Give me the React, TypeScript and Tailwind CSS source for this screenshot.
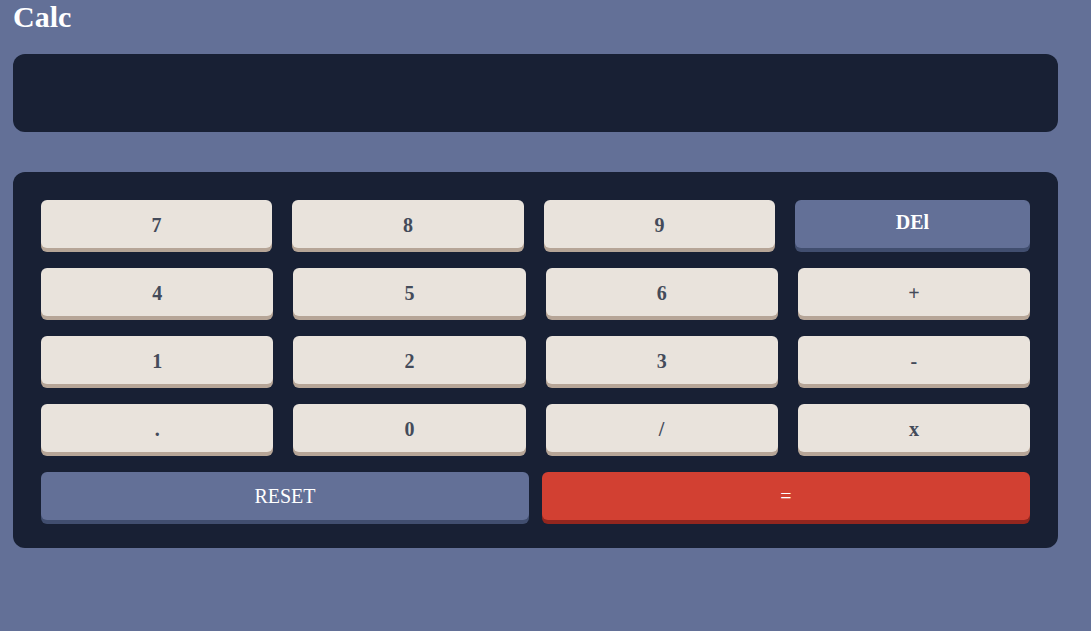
const ROW1 = ['7', '8', '9']
const GRID = ['4', '5', '6', '+', '1', '2', '3', '-', '.', '0', '/', 'x']

function Key({ label }: { label: string }) {
  return (
    <button className="h-12 pt-[2px] rounded-md bg-[#e9e3dc] shadow-[0_4px_0_#b6a597] text-[20px] font-bold text-[#444b5a] cursor-pointer">
      {label}
    </button>
  )
}

export default function App() {
  return (
    <main className="min-h-screen bg-[#637097] px-[13px] font-['Liberation_Serif',serif]">
      <h1 className="text-[30px] leading-[34px] font-bold text-white">Calc</h1>

      <div className="mt-5 w-[1045px] h-[78px] rounded-xl bg-[#182034]" />

      <div className="mt-10 w-[1045px] rounded-xl bg-[#182034] p-7 flex flex-col gap-5">
        <div className="grid grid-cols-[231px_232px_231px_235px] gap-x-5">
          {ROW1.map(k => <Key key={k} label={k} />)}
          <button className="h-12 pb-1 rounded-md bg-[#637097] shadow-[0_4px_0_#414e6f] text-[20px] font-bold text-white cursor-pointer">
            DEl
          </button>
        </div>

        <div className="grid grid-cols-4 gap-x-5 gap-y-5">
          {GRID.map(k => <Key key={k} label={k} />)}
        </div>

        <div className="grid grid-cols-2 gap-x-[13px]">
          <button className="h-12 rounded-md bg-[#637097] shadow-[0_4px_0_#414e6f] text-[20px] text-white cursor-pointer">
            RESET
          </button>
          <button className="h-12 rounded-md bg-[#d24032] shadow-[0_4px_0_#93261e] text-[20px] text-white cursor-pointer">
            =
          </button>
        </div>
      </div>
    </main>
  )
}
